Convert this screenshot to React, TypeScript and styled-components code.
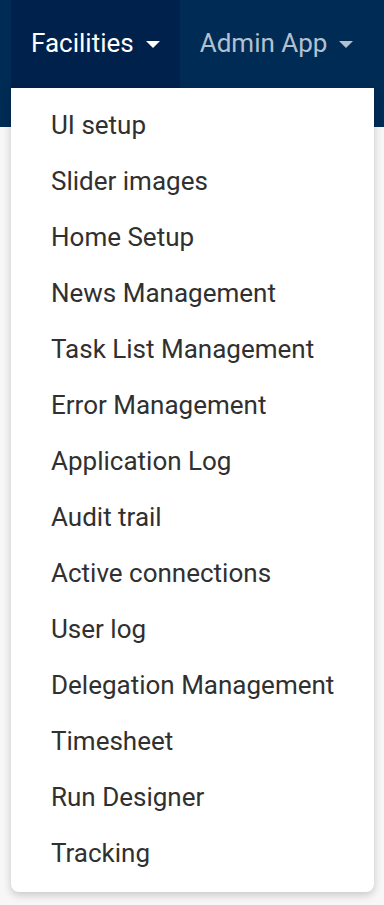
import * as React from "react";
import styled, { createGlobalStyle } from "styled-components";

const GlobalStyle = createGlobalStyle`
  html, body {
    margin: 0;
    padding: 0;
    background: #f7f7f7;
    font-family: Roboto, "Liberation Sans", sans-serif;
  }
`;

const Page = styled.div`
  position: relative;
  width: 384px;
  height: 905px;
  overflow: hidden;
`;

const NavBar = styled.nav`
  height: 127px;
  background: #002b55;
  display: flex;
  align-items: flex-start;
  padding-left: 11px;
`;

const NavItem = styled.div<{ active?: boolean }>`
  position: relative;
  height: 88px;
  display: flex;
  align-items: center;
  gap: 12px;
  padding: 0 20px 2px;
  box-sizing: border-box;
  font-size: 26px;
  color: ${(p) => (p.active ? "#ffffff" : "#b3c0d0")};
  background: ${(p) => (p.active ? "#00214b" : "transparent")};
`;

const Caret = styled.span`
  width: 0;
  height: 0;
  border-left: 7px solid transparent;
  border-right: 7px solid transparent;
  border-top: 7px solid currentColor;
  margin-top: 3px;
`;

const Menu = styled.ul`
  position: absolute;
  top: 88px;
  left: 0;
  width: 363px;
  margin: 0;
  padding: 9px 0 11px;
  list-style: none;
  background: #ffffff;
  border-radius: 0 0 8px 8px;
  box-shadow: 0 3px 8px rgba(0, 0, 0, 0.2);
  z-index: 2;
`;

const MenuItem = styled.li`
  height: 56px;
  display: flex;
  align-items: center;
  padding-left: 40px;
  font-size: 26px;
  color: #303030;
`;

const items = [
  "UI setup",
  "Slider images",
  "Home Setup",
  "News Management",
  "Task List Management",
  "Error Management",
  "Application Log",
  "Audit trail",
  "Active connections",
  "User log",
  "Delegation Management",
  "Timesheet",
  "Run Designer",
  "Tracking",
];

export default function App() {
  return (
    <Page>
      <GlobalStyle />
      <NavBar>
        <NavItem active>
          Facilities <Caret />
          <Menu>
            {items.map((i) => (
              <MenuItem key={i}>{i}</MenuItem>
            ))}
          </Menu>
        </NavItem>
        <NavItem>
          Admin App <Caret />
        </NavItem>
      </NavBar>
    </Page>
  );
}
